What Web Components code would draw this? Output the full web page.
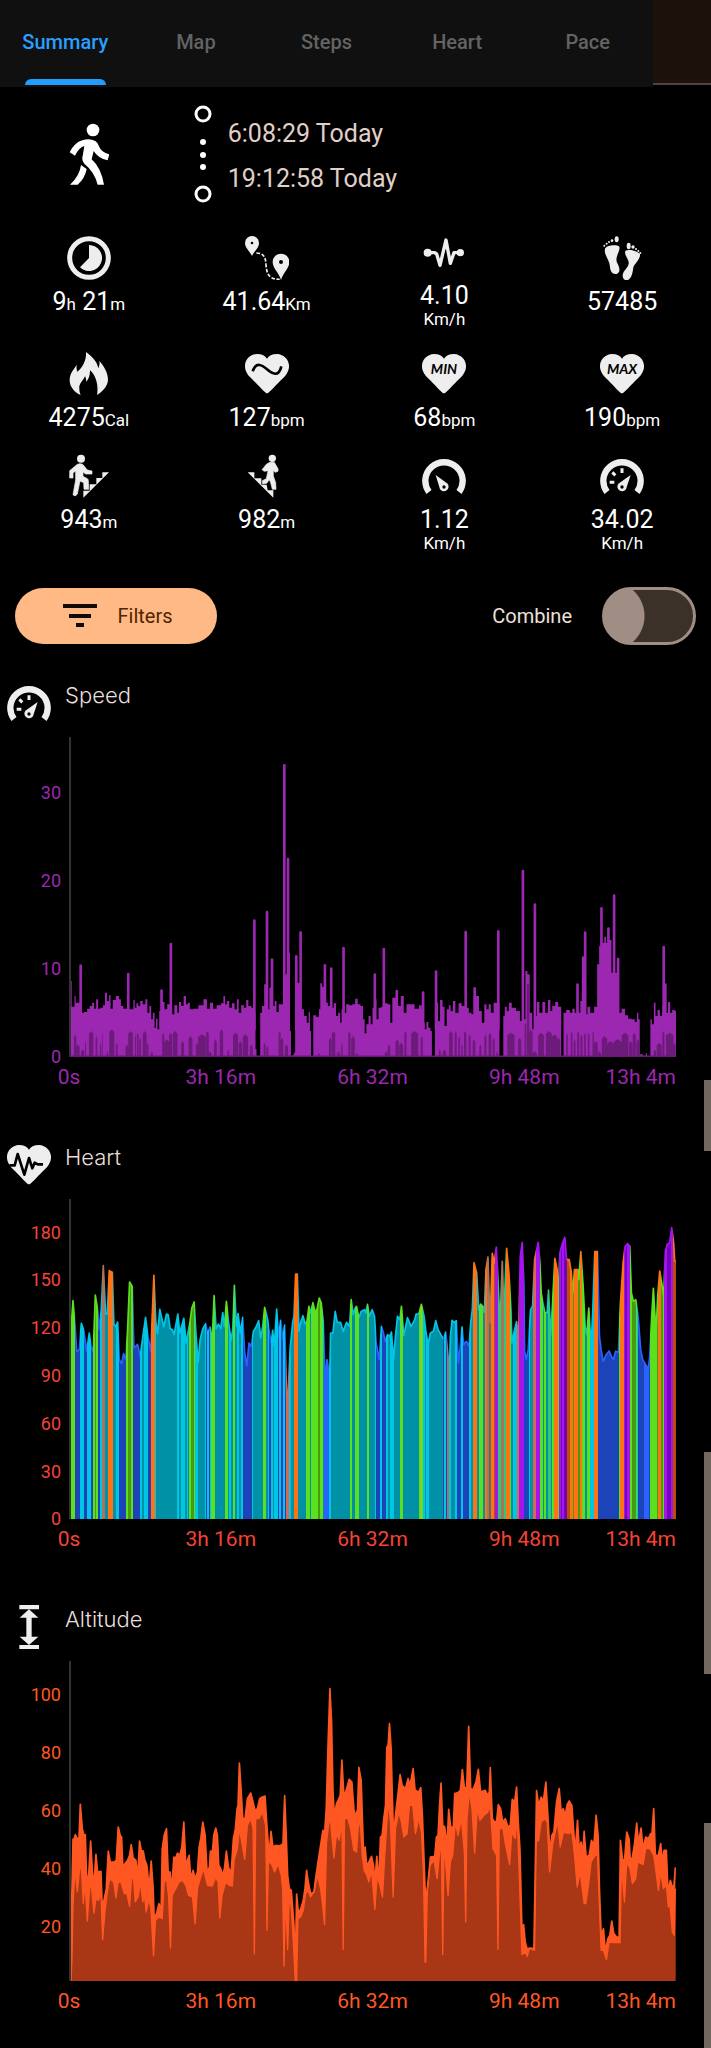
<!DOCTYPE html>
<html lang="en">
<head>
<meta charset="utf-8">
<meta name="viewport" content="width=device-width, initial-scale=1">
<title>Activity summary</title>
<style>
html, body { margin: 0; background: #000; }
body { font-family: Roboto, sans-serif; color: #fff; }
</style>
</head>
<body>
<activity-page>
  <tab-bar></tab-bar>
  <session-header start="6:08:29 Today" end="19:12:58 Today"></session-header>
  <stat-grid>
    <stat-tile icon="duration">9<small>h</small> 21<small>m</small></stat-tile>
    <stat-tile icon="route">41.64<small>Km</small></stat-tile>
    <stat-tile icon="pace" unit="Km/h">4.10</stat-tile>
    <stat-tile icon="steps">57485</stat-tile>
    <stat-tile icon="flame">4275<small>Cal</small></stat-tile>
    <stat-tile icon="heartAvg">127<small>bpm</small></stat-tile>
    <stat-tile icon="heartMin">68<small>bpm</small></stat-tile>
    <stat-tile icon="heartMax">190<small>bpm</small></stat-tile>
    <stat-tile icon="climb">943<small>m</small></stat-tile>
    <stat-tile icon="descend">982<small>m</small></stat-tile>
    <stat-tile icon="gaugeMin" unit="Km/h">1.12</stat-tile>
    <stat-tile icon="gaugeMax" unit="Km/h">34.02</stat-tile>
  </stat-grid>
  <chart-controls></chart-controls>
  <data-chart series="speed" icon="gaugeMax" heading="Speed" ticks="30,20,10,0"></data-chart>
  <data-chart series="heart" icon="heartPulse" heading="Heart" ticks="180,150,120,90,60,30,0"></data-chart>
  <data-chart series="altitude" icon="altitude" heading="Altitude" ticks="100,80,60,40,20"></data-chart>
</activity-page>

<script>
const HEART = 'M800 523C795 523 790 515 745 470C722 443 737 407 770 405C785 405 795 410 800 419C805 410 815 405 830 405C863 407 878 443 855 470C810 515 805 523 800 523Z';
const GAUGE_ARC = '<path d="M223 816A56 56 0 1 1 313 816" fill="none" stroke="#eee" stroke-width="19"/>';
const heartIcon = inner => ['734 399 132 132', `<path d="${HEART}"/>${inner}`];
const heartLabel = t => heartIcon(`<text x="800" y="465" text-anchor="middle" fill="#000" font-family="Lato, sans-serif" font-weight="700" font-style="italic" font-size="42">${t}</text>`);

const ICONS = {
  duration: ['201 48 132 132', '<circle cx="267" cy="114" r="58" fill="none" stroke="#eee" stroke-width="15"/><path d="M267 75A39 39 0 1 1 240 142L267 114Z"/>'],
  route: ['734 48 132 132', '<path fill-rule="evenodd" d="M755 108C750 95 734 85 734 69A21 21 0 0 1 776 69C776 85 760 95 755 108ZM751 69a4 4 0 1 0 8 0a4 4 0 1 0 -8 0"/><path fill-rule="evenodd" d="M842 180C837 160 817 145 817 126A25 25 0 0 1 867 126C867 145 847 160 842 180ZM836 126a6 6 0 1 0 12 0a6 6 0 1 0 -12 0"/><path d="M768 99C790 99 796 112 797 134C799 165 808 178 838 178" fill="none" stroke="#eee" stroke-width="5" stroke-dasharray="11 5"/>'],
  pace: ['202 48 132 114', '<circle cx="219" cy="98" r="12"/><circle cx="317" cy="98" r="11"/><path d="M219 98H240L246 102L256 136L274 60L287 130L298 98H317" fill="none" stroke="#eee" stroke-width="10" stroke-linejoin="round"/>'],
  steps: ['734 48 132 132', '<ellipse cx="784" cy="58" rx="6" ry="9"/><circle cx="770" cy="62" r="4"/><circle cx="761" cy="66" r="3"/><circle cx="754" cy="71" r="3"/><circle cx="747" cy="77" r="3"/><path d="M749 86C754 75 785 73 792 80C796 91 780 108 784 125C792 140 797 155 786 161C770 166 764 150 764 140C763 120 745 105 749 86Z"/><ellipse cx="820" cy="78" rx="6" ry="10"/><circle cx="833" cy="81" r="5"/><circle cx="842" cy="87" r="3"/><circle cx="849" cy="93" r="3"/><circle cx="855" cy="99" r="3"/><path d="M810 93C820 86 845 92 854 102C856 118 838 130 834 142C832 160 828 178 815 181C800 181 800 165 805 156C812 145 822 138 820 125C816 112 806 103 810 93Z"/>'],
  flame: ['201 399 132 132', '<path d="M258 399C280 415 292 430 295 448C298 440 300 432 298 425C310 440 325 460 324 484C323 503 305 520 291 528C296 505 290 470 270 454C270 470 266 480 259 488C258 482 258 476 255 472C250 485 235 495 238 510C238 517 240 523 242 528C225 520 210 505 209 485C208 465 222 450 230 438C229 446 230 452 232 458C242 450 260 430 258 399Z"/>'],
  heartAvg: heartIcon('<path d="M757 457C768 427 785 438 800 451C815 464 835 476 843 442" fill="none" stroke="#000" stroke-width="8"/>'),
  heartMin: heartLabel('MIN'),
  heartMax: heartLabel('MAX'),
  climb: ['201 702 132 132', '<circle cx="243" cy="716" r="12"/><path d="M232 733Q240 729 248 733L262 750L276 753V762H257L249 756V769L262 776Q265 778 265 782L266 808H252L251 788L240 783L232 822Q226 832 219 824L227 780V752L219 760V774H209V752Z" stroke="#eee" stroke-width="2" stroke-linejoin="round"/><path d="M327 757H307V774H289V793H269V812H250V833Z"/>'],
  descend: ['734 702 132 132', '<circle cx="816" cy="715" r="11"/><path d="M809 727H822L833 746V754L824 757L819 750V768L826 788L827 808H816L811 788L807 779L799 790L787 792L786 782L798 776L803 752L792 754L785 749L799 732Z" stroke="#eee" stroke-width="2" stroke-linejoin="round"/><path d="M742 757H762V775H783V794H799L802 811H819V833Z"/>'],
  gaugeMin: ['202 702 132 132', GAUGE_ARC + '<path fill-rule="evenodd" d="M243 765L279 791A14 14 0 1 1 256 808ZM263 801a5 5 0 1 0 10 0a5 5 0 1 0 -10 0"/>'],
  gaugeMax: ['202 702 132 132', GAUGE_ARC + '<path fill-rule="evenodd" d="M294 765L257 791A14 14 0 1 0 280 808ZM263 801a5 5 0 1 0 10 0a5 5 0 1 0 -10 0"/><path d="M268 745V759M239 757L248 766M231 787H245" stroke="#eee" stroke-width="9"/>'],
  heartPulse: heartIcon('<path d="M741 466H757L766 432L786 494L800 444L810 475L817 458L826 463H842" fill="none" stroke="#000" stroke-width="8" stroke-linejoin="round"/>'),
  altitude: ['21 45 132 132', '<path d="M58 45H117V58H58ZM58 165H117V178H58ZM87 58L115 83H95V140H115L87 165L59 140H79V83H59Z"/>']
};
function icon(name, height = 44) {
  const [box, body] = ICONS[name];
  return `<svg width="44" height="${height}" viewBox="${box}" fill="#eee" aria-hidden="true">${body}</svg>`;
}

class BaseElement extends HTMLElement {
  connectedCallback() {
    if (!this.shadowRoot) this.attachShadow({ mode: 'open' }).innerHTML = this.render();
  }
}

customElements.define('activity-page', class extends BaseElement {
  render() {
    return `<style>
      :host { display: block; position: relative; background: #000; padding-bottom: 39px; }
      .rail { position: absolute; top: 0; right: 0; bottom: 0; width: 7px; display: flex; flex-direction: column; }
      .rail i { background: #72685f; height: 71px; margin-top: 1080px; }
      .rail i + i { height: 222px; margin-top: 301px; }
      .rail i + i + i { height: auto; flex: 1; margin-top: 149px; }
    </style><slot></slot><div class="rail"><i></i><i></i><i></i></div>`;
  }
});

customElements.define('tab-bar', class extends BaseElement {
  render() {
    const tabs = ['Summary', 'Map', 'Steps', 'Heart', 'Pace'];
    return `<style>
      :host { display: flex; height: 87px; }
      nav { flex: 1; display: grid; grid-template-columns: repeat(5, 1fr); background: #101010; }
      a { display: flex; flex-direction: column; align-items: center; justify-content: flex-end;
          color: #636363; text-decoration: none; font-size: 20px; font-weight: 500; line-height: 24px; }
      a::after { content: ""; width: 81px; height: 6px; margin: 25px 0 2px; border-radius: 6px 6px 0 0; }
      a[aria-current] { color: #2a9fff; }
      a[aria-current]::after { background: #229dfb; }
      .rest { width: 58px; height: 83px; background: #1c120b; border-bottom: 2px solid #50453e; }
    </style>
    <nav>${tabs.map((t, i) => `<a href="#${t.toLowerCase()}"${i ? '' : ' aria-current="page"'}>${t}</a>`).join('')}</nav><div class="rest"></div>`;
  }
});

customElements.define('session-header', class extends BaseElement {
  render() {
    return `<style>
      :host { display: grid; grid-template-columns: 25% auto 1fr; align-items: center; padding: 18px 0 33px; }
      .walk { justify-self: center; }
      .line { margin: 0 16px; }
      .times { padding-top: 3px; }
      p { margin: 0; font-size: 25px; line-height: 45px; color: #e0d0c8; }
      svg { display: block; }
    </style>
    <svg class="walk" width="40" height="62" viewBox="204 346 120 186" fill="#fff" aria-hidden="true">
      <circle cx="276" cy="367" r="19"/>
      <path d="M244 398Q265 390 283 400Q292 406 294 416Q301 435 325 440L320 458Q291 452 278 430L272 455Q300 480 309 531H290Q280 492 250 468Q241 460 245 445L250 415Q235 418 222 444L206 434Q220 405 244 398ZM240 472L257 484Q252 512 230 531H207Q236 505 240 472Z"/>
    </svg>
    <svg class="line" width="18" height="98" viewBox="0 0 18 98" fill="#fff" aria-hidden="true">
      <circle cx="9" cy="9" r="7" fill="none" stroke="#fff" stroke-width="3"/>
      <circle cx="9" cy="37" r="3"/><circle cx="9" cy="50" r="3"/><circle cx="9" cy="62" r="3"/>
      <circle cx="9" cy="89" r="7" fill="none" stroke="#fff" stroke-width="3"/>
    </svg>
    <div class="times"><p>${this.getAttribute('start')}</p><p>${this.getAttribute('end')}</p></div>`;
  }
});

customElements.define('stat-grid', class extends BaseElement {
  render() {
    return `<style>
      :host { display: grid; grid-template-columns: repeat(4, 1fr); row-gap: 20px; padding-bottom: 31px; }
    </style><slot></slot>`;
  }
});

customElements.define('stat-tile', class extends BaseElement {
  render() {
    const name = this.getAttribute('icon');
    const unit = this.getAttribute('unit');
    return `<style>
      :host { display: flex; flex-direction: column; align-items: center; font-size: 25px; line-height: 28px; }
      svg { display: block; margin-bottom: 8px; }
      ::slotted(small), .unit { font-size: 17px; }
      .unit { line-height: 18px; padding-bottom: 4px; }
    </style>${icon(name, name === 'pace' ? 38 : 44)}<div><slot></slot></div>${unit ? `<div class="unit">${unit}</div>` : ''}`;
  }
});

customElements.define('chart-controls', class extends BaseElement {
  render() {
    return `<style>
      :host { display: flex; align-items: center; justify-content: space-between; padding: 0 15px 36px; font-size: 20px; }
      button { display: flex; align-items: center; justify-content: center; gap: 20px; width: 202px; height: 56px;
               padding: 0 0 0 4px; border: 0; border-radius: 28px; background: #ffb985; color: #4f2500;
               font: 400 20px/24px Roboto, sans-serif; }
      label { display: flex; align-items: center; gap: 30px; color: #ede0da; }
      input { appearance: none; margin: 0; width: 94px; height: 58px; box-sizing: border-box; border: 3px solid #a08d84;
              border-radius: 29px; background: radial-gradient(circle at 5px 26px, #a08d84 34px, #3b3129 35px); }
    </style>
    <button type="button"><svg width="34" height="24" viewBox="0 0 34 24" aria-hidden="true"><path d="M0 0H34V4H0ZM6 10H28V14H6ZM13 19H21V23H13Z" fill="#100a05"/></svg>Filters</button>
    <label>Combine <input type="checkbox" role="switch"></label>`;
  }
});

/* Series samples. Each list is split in two stretches; x and y are in thirds of a pixel. */
const SHIFT = 1065;
const parse = s => s.trim().split(/\s+/).map(p => p.split(',').map(Number));
const join = (a, b) => parse(a).concat(parse(b).map(([x, ...r]) => [x + SHIFT, ...r]));

const SPEED_TOP = join(
`210,755 214,832 219,832 222,800 226,820 235,820 243,850 255,848 262,838 270,830 277,820 282,838 289,810 294,838 302,835 310,828 314,790 322,815 327,798 331,838 340,812 350,800 358,810 362,830 372,838 386,840 396,840 399,812 404,835 409,822 415,830 421,815 430,825 437,810 442,850 449,830 453,870 459,850 463,895 468,868 472,900 478,845 482,782 487,818 495,840 503,825 514,855 527,828 532,850 537,818 544,830 553,800 558,825 564,820 570,840 585,838 600,828 616,810 621,838 634,820 640,838 655,828 666,822 670,800 676,825 681,815 690,835 697,822 706,840 711,810 717,850 726,828 733,835 740,812 746,830 758,835 763,850 766,960 769,983 777,983 780,850 788,830 793,765 799,760 803,840 809,775 819,830 825,815 830,848 838,825 846,825 849,740 858,735 866,670 870,905 872,983 876,978 883,970 884,850 891,760 898,760 905,840 915,860 922,880 926,848 930,905 933,983 936,983 940,858 953,862 957,840 961,762 968,772 978,820 986,830 996,835 1003,822 1010,860 1016,850 1022,880 1024,840 1032,850 1042,825 1050,828 1060,825`,
`3,808 10,825 20,830 25,870 30,912 35,885 43,860 48,885 54,835 60,810 66,870 72,835 82,832 92,822 101,825 108,880 113,805 118,805 130,830 142,800 148,850 158,825 170,825 185,838 196,828 202,840 206,880 210,900 216,878 222,895 228,905 231,983 237,983 240,835 246,820 250,875 258,812 265,832 270,890 278,840 283,828 288,845 297,815 303,850 316,822 322,830 336,835 345,850 352,855 358,800 367,800 375,845 384,880 390,825 397,840 403,825 410,850 420,820 431,820 434,983 442,983 446,860 451,832 458,845 464,820 475,835 490,845 498,875 508,870 513,725 520,735 527,850 535,900 541,860 549,818 556,850 567,818 573,850 583,812 588,845 594,830 606,818 612,832 617,832 619,983 624,983 626,850 640,842 648,850 655,838 662,850 671,850 680,815 686,760 694,855 700,832 710,850 724,832 728,705 736,650 745,640 750,622 755,640 766,632 772,730 783,730 789,730 794,850 805,838 815,858 823,868 835,870 843,878 848,850 852,870 856,975 870,979 874,972 878,979 885,980 887,870 894,885 899,820 904,860 911,842 918,860 925,830 935,850 943,818 948,850 955,842 963,845`);
const SPEED_SPIKES = join('239,709 382,734 510,644 482,784 761,574 799,548 814,691 851,108 862,389 887,681 900,609 973,708 992,718 1029,656',
`58,736 85,659 124,785 203,790 242,727 331,608 358,777 429,606 503,425 539,526 667,766 684,685 690,610 739,537 760,598 777,499 789,689 926,653 931,766`);
const SPEED_GAPS = join(
`219,7,915 226,10,945 240,10,960 252,3,935 264,13,905 284,5,920 297,4,940 303,2,910 317,5,965 325,15,900 345,5,940 374,8,945 382,14,905 402,3,915 408,5,910 415,5,925 426,11,905 438,5,940 450,6,965 484,6,910 490,15,930 505,9,910 516,14,905 541,9,935 563,12,920 585,7,940 592,23,915 616,8,905 624,8,965 640,8,930 657,10,900 680,5,960 697,15,910 714,10,935 726,16,915 748,8,945 789,6,940 797,6,950 834,6,905 840,8,925 853,9,945 952,6,970 985,8,925 994,10,905 1010,8,965 1022,4,940 1043,7,905 1052,11,920`,
`0,8,970 88,8,965 97,7,945 120,10,930 131,12,940 147,6,905 167,21,905 196,6,920 250,6,960 262,10,960 281,11,905 298,6,905 309,5,920 318,4,945 326,7,905 340,6,915 352,8,930 372,6,945 387,6,915 400,8,910 412,6,925 423,5,965 456,22,910 488,10,925 508,5,880 515,7,760 522,10,900 532,13,965 549,17,910 572,18,905 590,16,915 606,9,925 633,5,910 647,5,905 656,5,930 666,6,905 676,6,915 687,5,910 698,5,910 712,4,905 716,12,935 728,10,965 740,16,920 756,19,935 775,25,930 800,20,910 822,10,935 833,9,910 844,10,930 896,7,960 905,15,940 922,6,905 933,22,910 955,7,940`);

const HEART_TOP = join(
`210,600 216,513 223,600 227,665 235,660 241,581 248,600 257,665 265,610 270,650 277,665 283,496 290,540 295,600 301,540 307,408 314,553 319,553 325,423 334,428 339,585 345,590 350,577 355,690 362,702 368,672 375,690 380,600 386,457 394,470 399,655 410,644 418,680 426,620 434,563 441,620 450,665 454,560 459,437 465,580 470,612 477,539 485,575 489,590 497,553 502,555 508,597 515,600 520,615 531,553 537,610 549,566 556,640 567,580 573,535 580,517 586,620 592,700 598,630 606,597 615,582 620,615 628,592 634,640 640,498 646,597 653,583 660,597 666,549 671,590 677,515 683,575 691,632 696,600 701,467 707,590 712,552 719,610 726,563 732,670 738,708 745,640 752,650 758,605 766,592 774,573 780,625 786,590 792,533 801,570 806,610 812,640 816,602 821,650 828,538 834,620 840,572 846,630 852,586 858,800 862,800 869,650 876,580 880,560 885,433 890,433 895,605 901,575 907,558 914,583 919,575 925,530 930,550 937,519 944,550 950,535 956,505 962,520 968,575 972,700 975,760 979,690 984,720 987,760 990,610 997,610 1004,545 1010,578 1020,578 1028,605 1038,578 1047,590 1052,510 1058,555 1064,535`,
`3,530 10,565 17,545 27,540 31,550 36,524 41,560 50,540 57,560 62,640 71,690 78,590 84,610 89,635 96,615 103,620 108,607 114,690 120,620 126,560 133,570 138,530 145,618 156,564 167,590 178,570 182,553 190,553 198,524 206,560 212,610 218,645 225,610 234,605 241,573 248,600 258,618 265,628 271,607 278,680 281,768 285,620 290,572 296,578 303,573 309,700 315,650 320,592 325,645 333,635 341,650 346,580 351,540 356,399 364,430 370,540 376,523 382,530 387,548 392,420 398,382 404,580 411,371 417,400 423,352 429,470 434,585 441,395 446,545 454,356 461,430 467,540 470,640 478,600 484,576 490,630 495,380 501,338 506,470 508,665 513,688 519,660 526,540 532,530 538,390 549,338 554,400 558,490 563,520 569,550 576,548 580,481 586,620 592,520 599,386 606,420 609,530 614,370 622,340 629,323 634,390 642,390 648,425 653,490 658,420 668,420 671,450 677,366 684,470 690,590 695,615 701,535 708,655 713,540 719,366 727,366 733,620 738,660 744,695 753,675 762,664 769,680 775,690 781,665 790,668 796,520 804,400 810,350 818,342 824,350 829,490 835,515 842,510 849,560 857,660 863,690 872,705 880,716 884,680 890,560 895,476 903,610 908,500 914,424 920,460 926,500 931,365 937,343 944,340 950,294 956,340 959,394 963,394`);
/* Heart-rate zones: start position and zone letter. Lower case is a rising edge, upper case a plateau. */
const zones = (s, shift) => s.trim().split(/\s+/).map(p => [parseInt(p) + shift, p.slice(-1)]);
const HEART_ZONES = zones(
`210g 221B 237c 249B 258c 270B 275g 281G 285g 291B 298c 303k 311C 320o 336C 346c 353B 376g 382G 390g 396B 418c 424C 430c 442B 450o 462c 466C 528c 535C 542c 552C 558c 563C 565g 571G 579g 584c 592C 614c 617B 620c 624B 627c 632g 644C 673g 681C 686c 691C 697g 704C 709c 714C 721c 728B 753c 757C 788g 796C 801c 806B 811c 817C 821c 831B 836c 842B 848c 852B 856r 866c 871C 879o 892C 916g 928C 932g 952G 958g 966C 970b 985c 990C 1048g 1055C 1062g`, 0).concat(zones(
`9C 33g 39C 58c 63B 75c 80B 92c 97C 103c 117C 135g 142C 190g 196y 199g 203c 208C 213c 220C 262B 267c 272B 274k 282c 287C 299c 305B 317c 322B 341c 347C 352o 366C 371g 384C 389o 394k 402K 408o 417O 419v 427m 436k 446m 451o 463g 468C 473c 486r 492v 506B 520c 525C 534r 541v 555g 562C 567g 572C 577m 586C 591g 595o 608g 612v 616V 621v 625V 634O 645o 652G 656o 668G 674o 682g 690C 695g 705c 710g 712c 716o 730B 791g 796o 807v 811V 815v 826g 830G 842g 845c 850B 868b 882B 886g 905G 909o 918G 924g 928v 935V 948v 955O`, SHIFT));
const ZONE_FILL = { g: '#5be01e', G: '#489a10', y: '#a0c81e', b: '#2962ff', B: '#1c43b8', c: '#00c6e6', C: '#0091a6', o: '#ff7312', O: '#b85000', k: '#a8745c', K: '#5c6a60', r: '#e06450', m: '#30c878', v: '#a414f0', V: '#7600b6' };
const ZONE_LINE = { ...ZONE_FILL, G: '#5be01e', B: '#2962ff', C: '#00c6e6', O: '#ff7312', K: '#a8745c', V: '#a414f0' };

const ALT_TOP = join(
`210,980 213,900 216,752 220,750 223,738 228,750 234,748 238,647 244,720 249,740 253,738 257,870 263,860 269,757 275,860 280,870 285,797 290,850 300,848 304,960 309,935 316,900 322,787 328,820 340,820 346,815 352,715 358,740 362,745 366,840 372,825 380,815 386,800 391,768 397,808 405,815 410,870 416,757 421,785 427,787 432,815 438,830 445,900 451,817 457,900 460,990 467,975 474,945 481,960 484,783 490,740 497,720 502,850 508,850 512,910 519,806 526,805 530,793 537,800 543,775 549,700 555,830 565,800 570,870 577,845 583,870 590,850 595,775 600,750 606,700 613,740 619,850 626,835 629,787 635,790 639,740 645,718 650,740 654,830 660,840 665,860 671,840 677,787 683,835 691,855 698,750 704,720 709,660 712,650 716,523 721,600 726,690 733,690 740,630 750,613 757,640 763,665 770,660 777,630 785,625 793,622 798,700 803,770 808,768 811,728 817,775 825,770 838,772 847,765 852,621 857,745 861,860 866,900 872,905 880,1010 883,1100 885,1080 888,916 893,970 900,962 908,935 913,900 918,845 923,880 930,915 940,910 945,870 953,815 960,770 967,725 972,735 977,660 982,480 988,300 993,400 997,600 1001,680 1008,645 1015,630 1019,620 1024,514 1030,620 1036,608 1046,572 1054,580 1060,660 1064,690`,
`3,670 6,665 10,536 17,575 21,700 24,790 29,775 34,835 40,820 48,803 54,830 58,880 64,803 70,880 75,745 80,740 85,690 90,650 94,476 98,470 102,405 107,480 110,600 114,740 120,680 127,620 134,558 140,590 150,600 158,570 164,590 173,540 179,605 190,610 196,597 201,680 205,790 209,900 212,930 218,880 225,805 238,803 243,745 248,740 253,640 257,583 262,710 268,715 275,770 280,662 286,715 294,715 298,615 308,612 315,605 321,543 327,597 334,597 340,413 346,600 353,603 362,580 369,542 376,610 390,605 397,620 402,610 405,537 411,690 418,700 424,698 429,648 436,660 442,700 450,690 458,715 465,710 471,632 478,640 484,595 489,700 494,780 497,900 501,1060 505,1008 510,1060 515,1080 525,1078 536,1080 539,900 544,606 550,650 558,625 564,640 572,580 578,680 584,790 590,740 596,730 604,640 612,600 618,670 624,660 630,680 636,648 642,637 650,650 655,720 660,790 667,695 672,780 678,760 683,800 687,728 693,805 702,800 709,755 716,770 723,680 729,740 733,900 738,1040 745,1020 751,1090 758,1050 764,1040 770,997 776,1035 785,1045 792,1045 796,755 802,810 808,820 815,730 822,750 826,820 832,805 838,768 845,703 850,765 858,718 864,780 872,745 880,750 887,735 891,735 896,660 901,800 910,800 917,765 922,820 927,785 934,785 939,910 946,875 952,895 957,890 961,836`);
const ALT_LOW = join(
`210,1177 213,1110 216,950 222,840 229,910 235,850 240,820 247,945 252,880 259,997 266,900 270,880 279,973 285,930 293,935 300,910 305,1053 312,970 318,920 326,870 338,880 345,928 352,880 360,880 370,915 378,915 386,953 392,870 398,870 403,940 412,925 418,880 426,940 430,915 436,970 444,930 450,960 458,1102 464,995 475,985 484,990 490,880 497,870 503,920 509,1078 514,920 522,905 535,880 545,875 555,890 563,920 575,925 583,1005 590,900 600,865 608,840 620,890 635,892 645,865 652,880 657,988 664,920 675,880 685,890 695,892 700,815 710,780 716,720 723,760 732,812 740,710 750,690 757,720 761,1096 765,690 775,690 785,670 795,710 799,1025 803,820 812,825 822,850 832,825 842,860 846,900 850,1132 855,920 861,1083 866,920 872,960 878,1060 884,1177 888,1177 892,990 900,985 908,965 915,915 922,905 930,925 942,905 950,860 960,900 965,940 972,1008 978,760 985,700 990,700 1000,808 1008,735 1016,755 1024,700 1028,1082 1032,690 1042,690 1050,720 1060,785`,
`3,790 8,720 14,690 20,800 26,845 34,860 40,880 48,845 58,962 66,850 73,890 81,925 88,800 98,640 105,700 113,925 120,720 130,670 138,700 145,745 155,735 162,650 172,650 180,735 190,690 198,730 204,850 209,1120 211,1120 216,900 224,830 236,815 245,870 252,800 258,760 262,1098 266,760 272,840 278,920 285,820 292,800 300,700 308,740 318,690 327,790 331,1000 335,690 342,610 350,660 358,793 366,660 374,695 386,680 398,670 405,650 413,780 424,800 428,1082 432,720 443,720 450,765 463,828 470,730 480,750 486,690 492,860 500,1098 510,1090 516,1103 522,1080 538,1084 543,760 550,755 558,700 568,690 576,700 583,850 592,770 600,730 608,700 615,775 625,730 640,735 650,730 658,800 666,895 675,850 687,945 692,945 700,890 708,820 720,800 727,800 732,930 738,1085 745,1085 754,1113 762,1060 775,1062 795,1062 799,830 808,940 815,820 825,840 832,885 842,870 848,820 864,828 872,780 885,780 896,800 903,850 910,905 917,850 925,900 934,890 940,955 945,950 952,1030 958,1040 961,900`);

const line = pts => 'M' + pts.map(([x, y]) => `${x} ${y}`).join('L');
const area = (pts, base) => `${line(pts)}L${pts.at(-1)[0]} ${base}H210Z`;
const steps = (pts, base) => `M210 ${base}` + pts.map(([x, y], i) => {
  const next = i + 1 < pts.length ? pts[i + 1][0] : x;
  return `V${y}H${(x + next) / 2}`;
}).join('') + `V${base}Z`;
const stops = colors => HEART_ZONES.map(([x, z], i) => {
  const next = i + 1 < HEART_ZONES.length ? HEART_ZONES[i + 1][0] : 2028;
  const c = colors[z];
  return `<stop offset="${(x - 210) / 1818}" stop-color="${c}"/><stop offset="${(next - 210) / 1818}" stop-color="${c}"/>`;
}).join('');

const SERIES = {
  speed: {
    color: '#9c27b0', box: '210 23 1818 960', pad: '55px 0 0',
    plot: () => `<path d="${steps(SPEED_TOP, 983)}" fill="#9c27b0"/>
      <path d="${SPEED_GAPS.map(([x, w, y]) => `M${x} 983V${y + 8}L${x + w / 2} ${y}L${x + w} ${y + 8}V983Z`).join('')}" fill="#6d1b7b"/>
      <path d="${SPEED_SPIKES.map(([x, y]) => `M${x} ${y}V900`).join('')}" stroke="#9c27b0" stroke-width="8" stroke-linecap="round"/>
      <path d="M210 981H2028" stroke="#6d1b7b" stroke-width="5"/>`
  },
  heart: {
    color: '#f44336', box: '210 208 1818 960', pad: '33px 0 0',
    plot: () => `<defs>
        <linearGradient id="fill" gradientUnits="userSpaceOnUse" x1="210" x2="2028" y1="0" y2="0">${stops(ZONE_FILL)}</linearGradient>
        <linearGradient id="line" gradientUnits="userSpaceOnUse" x1="210" x2="2028" y1="0" y2="0">${stops(ZONE_LINE)}</linearGradient>
      </defs>
      <path d="${area(HEART_TOP, 1168)}" fill="url(#fill)"/>
      <path d="${line(HEART_TOP)}" fill="none" stroke="url(#line)" stroke-width="5" stroke-linejoin="round"/>`
  },
  altitude: {
    color: '#ff5722', box: '210 217 1818 960', pad: '33px 0 55px',
    plot: () => `<path d="${area(ALT_TOP, 1177)}" fill="#ff5722"/>
      <path d="${area(ALT_LOW, 1177)}" fill="#a93614"/>
      <path d="${line(ALT_LOW)}" fill="none" stroke="#ff5722" stroke-width="4" stroke-linejoin="round"/>
      <path d="${line(ALT_TOP)}" fill="none" stroke="#ff5722" stroke-width="5" stroke-linejoin="round"/>`
  }
};

customElements.define('data-chart', class extends BaseElement {
  render() {
    const s = SERIES[this.getAttribute('series')];
    const name = this.getAttribute('heading');
    const ticks = this.getAttribute('ticks').split(',');
    const times = ['0s', '3h 16m', '6h 32m', '9h 48m', '13h 4m'];
    return `<style>
      :host { display: block; padding-bottom: 53px; color: ${s.color}; }
      :host(:last-of-type) { padding-bottom: 0; }
      header { display: flex; gap: 14px; height: 56px; padding-left: 7px; }
      h2 { margin: 0; font: 300 22px/28px Inter, sans-serif; color: #e8dfda; }
      .chart { display: grid; grid-template-columns: 61px 1fr; column-gap: 8px; row-gap: 7px; padding-right: 35px; }
      .y { display: flex; flex-direction: column; justify-content: space-between; box-sizing: border-box;
           height: 320px; padding: ${s.pad}; font-size: 18px; }
      .y span { height: 0; display: flex; align-items: center; justify-content: flex-end; }
      .plot { height: 320px; border-left: 2px solid #333; }
      .plot svg { display: block; width: 100%; height: 100%; }
      .x { grid-column: 2; display: flex; justify-content: space-between; font-size: 21px; line-height: 26px; white-space: nowrap; }
      .x span { width: 0; display: flex; justify-content: center; }
      .x span:last-child { justify-content: flex-end; }
    </style>
    <header>${icon(this.getAttribute('icon'))}<h2>${name}</h2></header>
    <div class="chart">
      <div class="y">${ticks.map(t => `<span>${t}</span>`).join('')}</div>
      <div class="plot"><svg viewBox="${s.box}" preserveAspectRatio="none" role="img" aria-label="${name} over time">${s.plot()}</svg></div>
      <div class="x">${times.map(t => `<span>${t}</span>`).join('')}</div>
    </div>`;
  }
});
</script>
</body>
</html>
